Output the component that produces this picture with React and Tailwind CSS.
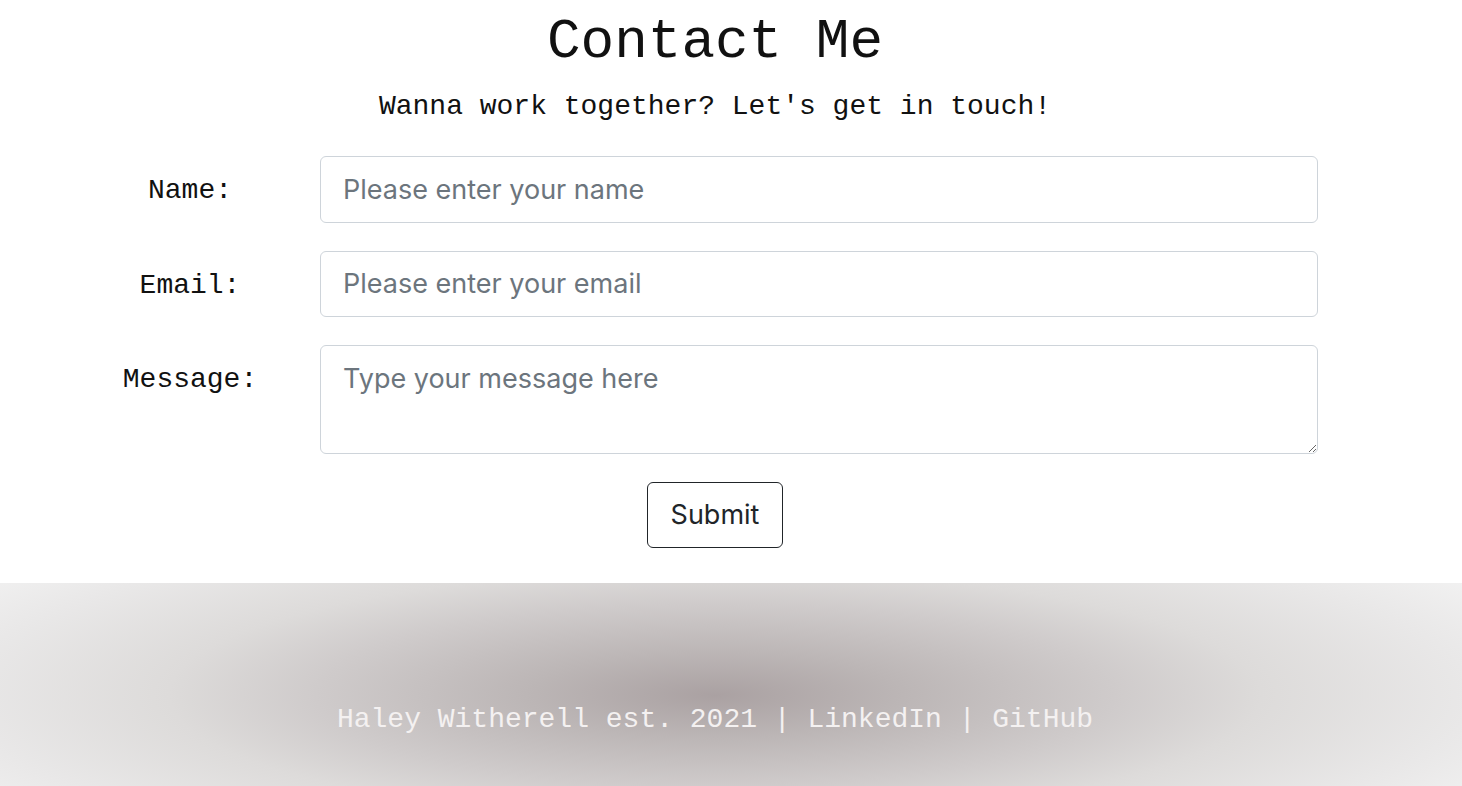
const mono = "font-['Liberation_Mono','Courier_New',monospace]";

const fieldClass =
  "w-[998px] rounded-[6px] border border-[#ced4da] bg-white px-[22px] text-[27px] text-[#212529] placeholder:text-[#6c757d] font-['Inter',sans-serif] focus:outline-none";

const Row = ({ label, children }) => (
  <div className="flex items-start">
    <label
      className={`${mono} h-[66px] w-[260px] text-center text-[28px] leading-[69px] text-[#111]`}
    >
      {label}
    </label>
    {children}
  </div>
);

const App = () => {
  return (
    <div className="min-h-[786px] bg-white">
      <div className="flex w-[1430px] flex-col items-center">
        <h1 className={`${mono} mt-[9px] text-[56px] leading-[1.2] text-[#111]`}>
          Contact Me
        </h1>
        <p className={`${mono} mt-[14px] text-[28px] leading-[1.2] text-[#111]`}>
          Wanna work together? Let's get in touch!
        </p>
      </div>

      <form
        className="mt-[32px] flex flex-col gap-[28px] pl-[60px]"
        onSubmit={(e) => e.preventDefault()}
      >
        <Row label="Name:">
          <input
            className={`${fieldClass} h-[67px]`}
            placeholder="Please enter your name"
            type="text"
          />
        </Row>
        <Row label="Email:">
          <input
            className={`${fieldClass} h-[66px]`}
            placeholder="Please enter your email"
            type="email"
          />
        </Row>
        <Row label="Message:">
          <textarea
            className={`${fieldClass} h-[109px] pt-[13px] pb-[12px] leading-[1.5]`}
            placeholder="Type your message here"
          />
        </Row>
        <div className="flex w-[1310px] justify-center">
          <button
            className="h-[66px] w-[136px] rounded-[6px] border border-[#212529] bg-white font-['Inter',sans-serif] text-[27px] text-[#212529]"
            type="submit"
          >
            Submit
          </button>
        </div>
      </form>

      <footer className="mt-[35px] h-[203px] w-full bg-[radial-gradient(ellipse_1050px_240px_at_715px_112px,#aaa1a2_0%,#bcb6b6_18%,#cfcbcb_38%,#dddbda_52%,#e9e8e8_72%,#f4f4f4_90%,#f7f7f7_100%)] pt-[120px]">
        <p className={`${mono} w-[1430px] text-center text-[28px] leading-[1.2] text-[#f4f1f1]`}>
          Haley Witherell est. 2021 | LinkedIn | GitHub
        </p>
      </footer>
    </div>
  );
};

export default App;
